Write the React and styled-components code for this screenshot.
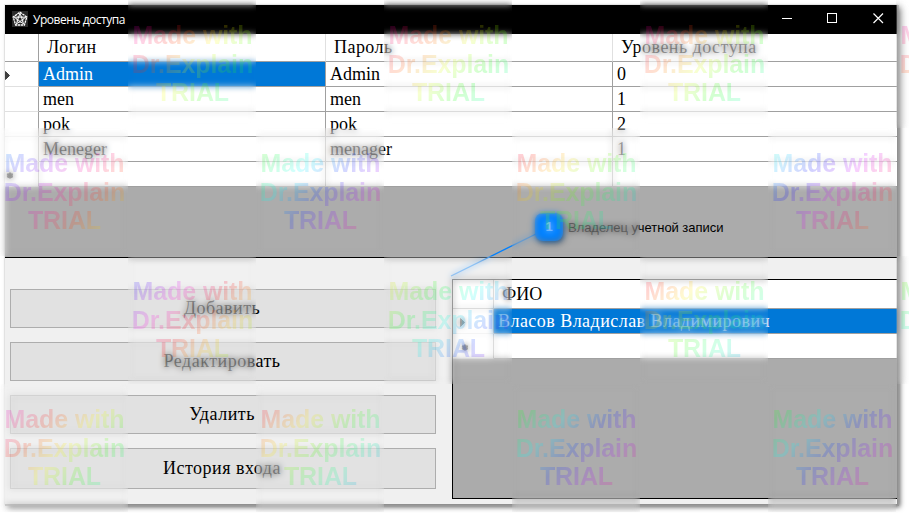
import React from "react";
import styled, { createGlobalStyle } from "styled-components";

const Global = createGlobalStyle`
  * { box-sizing: border-box; }
  html, body { margin: 0; background: #fff; overflow: hidden; }
`;

const Screen = styled.div`
  position: relative;
  width: 909px;
  height: 513px;
  padding: 5px;
  overflow: hidden;
  background: #fff;
  font-family: "Liberation Serif", "Times New Roman", serif;
  font-size: 18px;
  color: #000;
`;

const Window = styled.main`
  width: 892px;
  height: 499px;
  display: flex;
  flex-direction: column;
  background: #f0f0f0;
  box-shadow: 0 0 0 1px rgba(0, 0, 0, 0.06), 1px 1px 0 1px #999, 3px 3px 5px rgba(0, 0, 0, 0.65);
`;

const TitleBar = styled.header`
  height: 29px;
  flex: none;
  display: flex;
  align-items: center;
  padding-left: 7px;
  background: #000;
  color: #fff;
`;

const AppIcon = styled.svg`
  width: 16px;
  height: 16px;
  margin-top: -2px;
`;

const Title = styled.h1`
  flex: 1;
  margin: 0 0 0 5px;
  font: 400 12px/16px "Open Sans", "Noto Sans", sans-serif;
  letter-spacing: ${(p) => p.$tracking}px;
`;

const WindowControl = styled.svg`
  width: 46px;
  height: 29px;
  margin-right: ${(p) => (p.$smooth ? -5 : 0)}px;
  fill: none;
  stroke: #fff;
  shape-rendering: ${(p) => (p.$smooth ? "auto" : "crispEdges")};
`;

const Accounts = styled.section`
  height: 224px;
  flex: none;
  background: #ababab;
  border-bottom: 1px solid #000;
`;

const Row = styled.div`
  display: grid;
  grid-template-columns: ${(p) => p.$columns};
  height: ${(p) => p.$height || 25}px;
  background: #fff;
`;

const Cell = styled.div`
  display: flex;
  align-items: center;
  padding: ${(p) => (p.$header ? 0 : 1)}px 0 0 ${(p) => (p.$header ? 8 : 4)}px;
  letter-spacing: ${(p) => (p.$cyrillic ? 0.46 : 0)}px;
  white-space: nowrap;
  border-right: ${(p) => (p.$last ? 0 : 1)}px solid ${(p) => (p.$header ? "#e0e0e0" : "#a0a0a0")};
  border-bottom: 1px solid #a0a0a0;
  background: ${(p) => (p.$selected ? "#0078d7" : "#fff")};
  color: ${(p) => (p.$selected ? "#fff" : "#000")};
`;

const RowHeader = styled.div`
  display: flex;
  align-items: center;
  padding: 2px 0 0 ${(p) => p.$indent || 0}px;
  border-right: 1px solid #a0a0a0;
  border-bottom: 1px solid ${(p) => (p.$top ? "#a0a0a0" : "#e0e0e0")};
`;

const Marker = styled.svg`
  width: 8px;
  height: 11px;
  fill: #404040;
  stroke: #404040;
`;

const Body = styled.section`
  flex: 1;
  display: grid;
  grid-template-columns: 426px 445px;
  column-gap: 16px;
  padding: 21px 0 5px 5px;
`;

const Actions = styled.nav`
  display: grid;
  grid-template-rows: 39px 39px 39px 41px;
  row-gap: 14px;
  margin-top: 10px;
`;

const Button = styled.button`
  border: 1px solid #adadad;
  background: #e1e1e1;
  color: #000;
  padding: 0 2px 1px 0;
  font: inherit;
  letter-spacing: 0.5px;
`;

const Owners = styled.div`
  border: 1px solid #000;
  border-right: 0;
  background: #ababab;
`;

const Callout = styled.aside`
  position: absolute;
  left: 535px;
  top: 213px;
  display: flex;
  align-items: center;
  gap: 5px;
  font: 13px/16px "Liberation Sans", Arial, sans-serif;
`;

const CalloutLabel = styled.span`
  padding-top: 2px;
  letter-spacing: -0.04px;
`;

const Badge = styled.span`
  width: 28px;
  height: 28px;
  display: grid;
  place-items: center;
  border-radius: 8px;
  background: #0080ff;
  box-shadow: 1px 2px 4px rgba(0, 0, 0, 0.7);
  color: #fff;
  font-weight: 700;
`;

const Leader = styled.svg`
  position: absolute;
  left: 448px;
  top: 228px;
  width: 96px;
  height: 52px;
`;

const StampLayer = styled.div`
  position: absolute;
  inset: 0;
  width: 1024px;
  display: grid;
  grid-template-columns: repeat(8, 128px);
  grid-template-rows: repeat(4, 128px);
  pointer-events: none;
`;

const StampTile = styled.div`
  position: relative;
  grid-column: ${(p) => p.$col + 1};
  grid-row: ${(p) => p.$row + 1};
`;

const Frost = styled.div`
  position: absolute;
  inset: 0;
  backdrop-filter: blur(3px);
  opacity: ${(p) => p.$strength};
`;

const rainbow = (h) =>
  [0, 50, 100, 150, 200, 250, 300].map((d) => `hsl(${h + d} 100% 50%)`).join(", ");

const StampText = styled.div`
  position: relative;
  height: 128px;
  padding: 21px 0 0 1px;
  text-align: center;
  font: 700 25px/28.5px "Liberation Sans", Arial, sans-serif;
  letter-spacing: -0.1px;
  white-space: nowrap;
  color: transparent;
  background: linear-gradient(135deg, ${(p) => rainbow(p.$hue)});
  background-clip: text;
  opacity: 0.18;
`;

const stamps = [
  [1, 0, -90], [3, 0, -80], [5, 0, -80], [7, 0, -80],
  [0, 1, 175], [2, 1, 80], [4, 1, -50], [6, 1, 140],
  [1, 2, 205], [3, 2, 25], [5, 2, -45], [7, 2, 60],
  [0, 3, -90], [2, 3, -45], [4, 3, 80], [6, 3, 80],
];

const mainColumns = "34px 287px 287px 284px";
const ownerColumns = "41px 1fr";
const accounts = [
  ["Admin", "Admin", "0"],
  ["men", "men", "1"],
  ["pok", "pok", "2"],
  ["Meneger", "menager", "1"],
  ["", "", ""],
];
const actions = ["Добавить", "Редактировать", "Удалить", "История входа"];

function RowMarker({ kind }) {
  return (
    <Marker viewBox="0 0 8 11">
      {kind === "current" && <path d="M.5 1.5v8l4-4z" />}
      {kind === "new" && <path d="M5 2.5v6M2.2 4l5.6 3M7.8 4L2.2 7" strokeWidth="2.2" />}
    </Marker>
  );
}

export default function App() {
  return (
    <Screen>
      <Global />
      <Window>
        <TitleBar>
          <AppIcon viewBox="0 0 16 16" fill="none" stroke="#fff" strokeWidth="1">
            <rect width="16" height="16" fill="#2a2a2a" stroke="none" />
            <path d="M8 1.2L14.8 6L12.4 14H3.6L1.2 6z" strokeWidth="1.3" strokeDasharray="2.4 .6" />
            <path d="M8 2l3.6 11L2.2 6.2h11.6L4.4 13z" strokeWidth=".9" />
            <circle cx="8" cy="8.3" r="3.4" strokeWidth=".5" />
          </AppIcon>
          <Title $tracking={-0.47}>Уровень доступа</Title>
          <WindowControl viewBox="0 0 46 29"><path d="M18 13.5h10" /></WindowControl>
          <WindowControl viewBox="0 0 46 29"><rect x="17.5" y="8.5" width="9" height="9" /></WindowControl>
          <WindowControl $smooth viewBox="0 0 46 29"><path d="M17.5 8.5l9.5 9.5M27 8.5l-9.5 9.5" strokeWidth="1.2" /></WindowControl>
        </TitleBar>
        <Accounts>
          <Row $columns={mainColumns} $height={28}>
            <RowHeader $top />
            {["Логин", "Пароль", "Уровень доступа"].map((label, i) => (
              <Cell key={label} $header $cyrillic $last={i === 2}>{label}</Cell>
            ))}
          </Row>
          {accounts.map((account, r) => (
            <Row key={r} $columns={mainColumns}>
              <RowHeader><RowMarker kind={r === 0 ? "current" : r === 4 ? "new" : ""} /></RowHeader>
              {account.map((value, c) => (
                <Cell key={c} $last={c === 2} $selected={r === 0 && c === 0}>{value}</Cell>
              ))}
            </Row>
          ))}
        </Accounts>
        <Body>
          <Actions>
            {actions.map((label) => <Button key={label}>{label}</Button>)}
          </Actions>
          <Owners>
            <Row $columns={ownerColumns} $height={29}>
              <RowHeader $top />
              <Cell $header $last>ФИО</Cell>
            </Row>
            <Row $columns={ownerColumns}>
              <RowHeader $indent={7}><RowMarker kind="current" /></RowHeader>
              <Cell $selected $cyrillic $last>Власов Владислав Владимирович</Cell>
            </Row>
            <Row $columns={ownerColumns}>
              <RowHeader $indent={7}><RowMarker kind="new" /></RowHeader>
              <Cell $last />
            </Row>
          </Owners>
        </Body>
      </Window>
      <Leader viewBox="0 0 96 52"><path d="M3 48L90 5" stroke="#0080ff" strokeWidth="1.3" /></Leader>
      <Callout><Badge>1</Badge><CalloutLabel>Владелец учетной записи</CalloutLabel></Callout>
      <StampLayer>
        {stamps.map(([col, row, hue]) => (
          <StampTile key={`${col}-${row}`} $col={col} $row={row}>
            <Frost $strength={0.7} />
            <StampText $hue={hue}>Made with<br />Dr.Explain<br />TRIAL</StampText>
          </StampTile>
        ))}
      </StampLayer>
    </Screen>
  );
}
